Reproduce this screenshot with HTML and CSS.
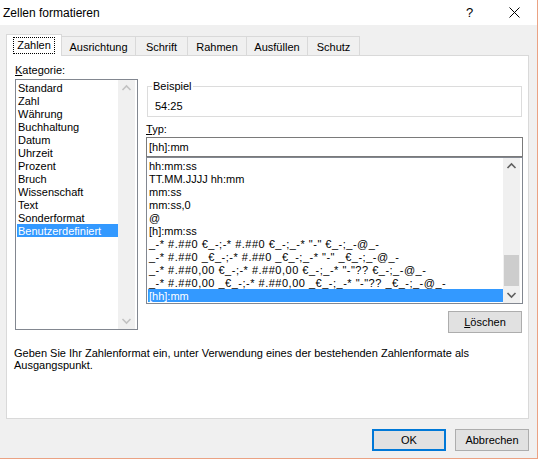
FILE: index.html
```html
<!DOCTYPE html>
<html lang="de">
<head>
<meta charset="utf-8">
<title>Zellen formatieren</title>
<link rel="stylesheet" href="styles.css">
</head>
<body>
<div class="window">
  <div class="titlebar">
    <span class="title">Zellen formatieren</span>
    <span class="help">?</span>
    <span class="close"><svg width="11" height="11" viewBox="0 0 11 11"><path d="M0.5 0.5L10.5 10.5M10.5 0.5L0.5 10.5" stroke="#000" stroke-width="1"/></svg></span>
  </div>
  <div class="tabs">
    <div class="tab active w-zahlen"><span class="focus">Zahlen</span></div>
    <div class="tab w-aus">Ausrichtung</div>
    <div class="tab w-schrift">Schrift</div>
    <div class="tab w-rahmen">Rahmen</div>
    <div class="tab w-fuell">Ausfüllen</div>
    <div class="tab w-schutz">Schutz</div>
  </div>
  <div class="panel">
    <div class="cols">
      <div class="left">
        <div class="label"><u>K</u>ategorie:</div>
        <div class="listbox cat">
          <ul class="items">
            <li>Standard</li>
            <li>Zahl</li>
            <li>Währung</li>
            <li>Buchhaltung</li>
            <li>Datum</li>
            <li>Uhrzeit</li>
            <li>Prozent</li>
            <li>Bruch</li>
            <li>Wissenschaft</li>
            <li>Text</li>
            <li>Sonderformat</li>
            <li class="sel">Benutzerdefiniert</li>
          </ul>
          <div class="vscroll off">
            <svg class="arr" width="17" height="17" viewBox="0 0 17 17"><path d="M4.5 10L8.5 6L12.5 10" fill="none" stroke="#c2c2c2" stroke-width="1.6"/></svg>
            <div class="track"></div>
            <svg class="arr" width="17" height="17" viewBox="0 0 17 17"><path d="M4.5 7L8.5 11L12.5 7" fill="none" stroke="#c2c2c2" stroke-width="1.6"/></svg>
          </div>
        </div>
      </div>
      <div class="right">
        <fieldset class="sample">
          <legend>Beispiel</legend>
          <div class="sample-val">54:25</div>
        </fieldset>
        <div class="label typ"><u>T</u>yp:</div>
        <div class="input">[hh]:mm</div>
        <div class="listbox fmt">
          <ul class="items">
            <li>hh:mm:ss</li>
            <li>TT.MM.JJJJ hh:mm</li>
            <li>mm:ss</li>
            <li>mm:ss,0</li>
            <li>@</li>
            <li>[h]:mm:ss</li>
            <li class="wide">_-* #.##0 €_-;-* #.##0 €_-;_-* "-" €_-;_-@_-</li>
            <li class="wide">_-* #.##0 _€_-;-* #.##0 _€_-;_-* "-" _€_-;_-@_-</li>
            <li class="wide">_-* #.##0,00 €_-;-* #.##0,00 €_-;_-* "-"?? €_-;_-@_-</li>
            <li class="wide">_-* #.##0,00 _€_-;-* #.##0,00 _€_-;_-* "-"?? _€_-;_-@_-</li>
            <li class="sel">[hh]:mm</li>
          </ul>
          <div class="vscroll">
            <svg class="arr" width="17" height="17" viewBox="0 0 17 17"><path d="M4.5 10L8.5 6L12.5 10" fill="none" stroke="#606060" stroke-width="1.6"/></svg>
            <div class="track"><div class="thumb"></div></div>
            <svg class="arr" width="17" height="17" viewBox="0 0 17 17"><path d="M4.5 7L8.5 11L12.5 7" fill="none" stroke="#606060" stroke-width="1.6"/></svg>
          </div>
        </div>
        <div class="btnrow"><button class="btn"><u>L</u>öschen</button></div>
      </div>
    </div>
    <p class="desc">Geben Sie Ihr Zahlenformat ein, unter Verwendung eines der bestehenden Zahlenformate als<br>Ausgangspunkt.</p>
  </div>
  <div class="footer">
    <button class="btn ok">OK</button>
    <button class="btn">Abbrechen</button>
  </div>
</div>
</body>
</html>
```

FILE: styles.css
```css
* { box-sizing: border-box; }
html, body { margin: 0; padding: 0; background: #ffffff; }
body {
  font-family: "Liberation Sans", Arial, sans-serif;
  font-size: 11px;
  color: #000;
}
u { text-decoration: underline; text-underline-offset: 1px; }

.window {
  width: 538px;
  height: 459px;
  background: #f0f0f0;
  border-right: 1px solid #eba283;
  border-bottom: 1px solid #eba283;
  display: flex;
  flex-direction: column;
}

.titlebar {
  height: 25px;
  background: #ffffff;
  display: flex;
  align-items: center;
  padding-left: 3px;
}
.title { font-size: 12px; flex: 1; }
.help { font-size: 13px; width: 12px; margin-right: 31px; }
.close { width: 11px; height: 11px; margin-right: 17px; display: flex; }

.tabs {
  display: flex;
  align-items: flex-end;
  margin-top: 8px;
  padding-left: 6px;
  height: 22px;
  position: relative;
  z-index: 1;
}
.tab {
  height: 19px;
  border: 1px solid #d9d9d9;
  border-bottom: none;
  background: #f0f0f0;
  margin-left: -1px;
  display: flex;
  align-items: center;
  justify-content: center;
  padding-top: 2px;
}
.tab.active {
  height: 22px;
  background: #ffffff;
  margin-left: 0;
  padding-top: 0;
  margin-bottom: -1px;
}
.focus {
  outline: 1px dotted #000;
  outline-offset: 0;
  padding: 1px 3px 1px 3px;
  line-height: 13px;
}
.w-zahlen { width: 56px; }
.w-aus { width: 75px; }
.w-schrift { width: 53px; }
.w-rahmen { width: 60px; }
.w-fuell { width: 62px; }
.w-schutz { width: 53px; }

.panel {
  margin-left: 6px;
  width: 523px;
  height: 364px;
  background: #ffffff;
  border: 1px solid #d9d9d9;
  padding: 8px 5px 0 8px;
}

.cols {
  display: grid;
  grid-template-columns: 123px 377px;
  column-gap: 8px;
  align-items: start;
}

.label { line-height: 13px; height: 13px; margin-bottom: 2px; }

.listbox {
  display: flex;
  border: 1px solid #828790;
  background: #fff;
  padding: 1px;
}
.listbox.cat { height: 251px; }
.listbox.fmt { height: 147px; }

.items {
  list-style: none;
  margin: 0;
  padding: 0;
  flex: 1;
  overflow: hidden;
}
.items li {
  height: 13px;
  line-height: 14px;
  padding-left: 1px;
  white-space: nowrap;
}
.items li.wide { letter-spacing: 0.5px; }
.items li.sel { background: #3399ff; color: #fff; }

.vscroll {
  width: 17px;
  background: #f0f0f0;
  display: flex;
  flex-direction: column;
  margin-top: -1px;
  margin-bottom: -1px;
  margin-right: 1px;
}
.arr { display: block; flex: none; }
.track { flex: 1; padding: 0 1px; display: flex; flex-direction: column; justify-content: flex-end; }
.thumb { height: 31px; background: #cdcdcd; }

.right { padding-top: 16px; }

.sample {
  margin: 0 1px;
  padding: 0 7px 3px 7px;
  border: 1px solid #dcdcdc;
  min-width: 0;
}
.sample legend {
  padding: 0 1px;
  margin-left: -3px;
  line-height: 13px;
}
.sample-val { line-height: 13px; padding-top: 7px; }

.typ { margin-top: 6px; margin-bottom: 1px; }

.input {
  height: 20px;
  border: 1px solid #7a7a7a;
  background: #fff;
  line-height: 18px;
  padding-left: 2px;
}

.btnrow { display: flex; justify-content: flex-end; margin-top: 7px; padding-right: 1px; }

.btn {
  font-family: inherit;
  font-size: 11px;
  width: 74px;
  height: 22px;
  background: #e1e1e1;
  border: 1px solid #adadad;
  padding: 0;
  color: #000;
  line-height: 18px;
}
.btn.ok { border: 2px solid #0078d7; }

.desc {
  margin: 14px 0 0 -1px;
  line-height: 12px;
  font-size: 11px;
}

.footer {
  display: flex;
  justify-content: flex-end;
  gap: 9px;
  padding-right: 8px;
  margin-top: 10px;
}
```
